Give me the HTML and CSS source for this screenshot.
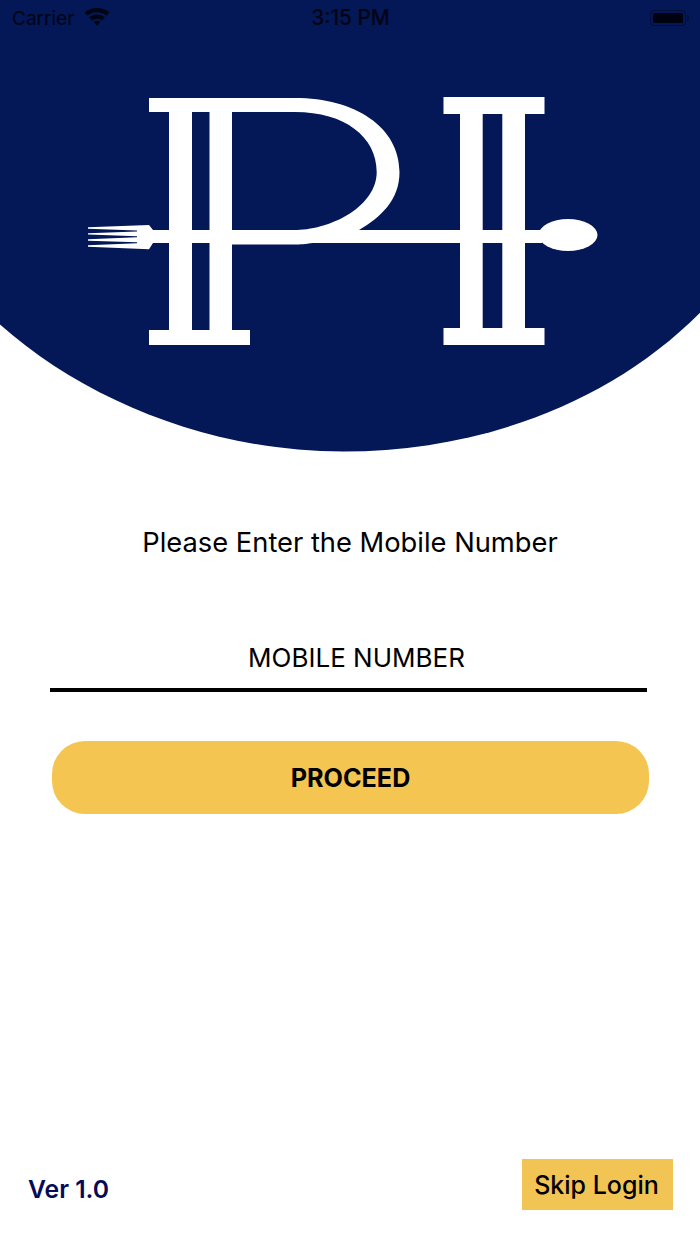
FILE: index.html
```html
<!DOCTYPE html>
<html lang="en">
<head>
<meta charset="utf-8">
<title>Login</title>
<link rel="stylesheet" href="styles.css">
</head>
<body>
<main class="screen">
  <header class="hero">
    <svg class="hero-art" viewBox="0 0 700 452" width="700" height="452" aria-hidden="true">
      <path class="disc" d="M0 0H700V312.700C610 403 480 451.500 343 451.500C210 451.500 85 400 0 324.500Z"/>
      <g class="logo">
        <rect x="149" y="98" width="101" height="14"/>
        <rect x="169" y="98" width="23" height="247"/>
        <rect x="209.500" y="98" width="22.500" height="247"/>
        <rect x="149" y="330" width="101" height="15"/>
        <rect x="443.500" y="97" width="101" height="17"/>
        <rect x="460" y="97" width="22.700" height="248"/>
        <rect x="502.300" y="97" width="22.700" height="248"/>
        <rect x="443.500" y="328" width="101" height="17"/>
        <rect x="150" y="230" width="392" height="13"/>
        <path d="M232 98H295C355 98 399.500 127 399.500 172C399.500 200 381 217 359 230V243H313C305 244 300 244.500 295 244.500H232V230H297C332 229 376.700 206 376.700 172C376.700 137 345 112 295 112H232Z"/>
        <ellipse cx="568" cy="235" rx="29.500" ry="16"/>
        <path d="M88 227.300L149 225L153 230V243L149 249.300L88 246.800V245.300L137 243.200V242.200L88 240.700V239.300L137 237.200V236.200L88 234.600V233.200L137 231.400V230.400L88 228.700Z"/>
      </g>
    </svg>
    <div class="status">
      <div class="status-left">
        <span>Carrier</span>
        <svg class="wifi" viewBox="0 0 26 18" width="26" height="18" aria-hidden="true">
          <path d="M9.800 14C11.800 12.400 14.200 12.400 16.200 14L13 18Z"/>
          <path d="M5.200 9.300C9.800 5.500 16.200 5.500 20.800 9.300L17.900 12.400C15 10.100 11 10.100 8.100 12.400Z"/>
          <path d="M.5 4.500C7.500 -1.500 18.500 -1.500 25.500 4.500L22.600 7.600C17 3 9 3 3.400 7.600Z"/>
        </svg>
      </div>
      <span class="clock">3:15 PM</span>
      <div class="battery-wrap">
        <div class="battery"><span class="battery-level"></span></div>
        <span class="battery-nub"></span>
      </div>
    </div>
  </header>

  <section class="login">
    <p class="prompt">Please Enter the Mobile Number</p>
    <div class="field">MOBILE NUMBER</div>
    <button class="proceed" type="button">PROCEED</button>
  </section>

  <footer class="foot">
    <span class="version">Ver 1.0</span>
    <button class="skip" type="button">Skip Login</button>
  </footer>
</main>
</body>
</html>
```

FILE: styles.css
```css
* { box-sizing: border-box; }
html, body { margin: 0; padding: 0; background: #fff; }
body { font-family: Inter, "Liberation Sans", sans-serif; color: #000; }
button { font-family: inherit; border: 0; padding: 0; color: #000; }

.screen {
  width: 700px;
  height: 1244px;
  display: flex;
  flex-direction: column;
  overflow: hidden;
}

.hero { position: relative; height: 452px; flex: none; }
.hero-art { display: block; }
.disc { fill: #041756; }
.logo { fill: #fff; }

.status {
  position: absolute;
  top: 0;
  left: 0;
  right: 0;
  height: 36px;
  display: flex;
  align-items: center;
  justify-content: space-between;
  padding: 0 11px 0 12px;
  font-size: 19px;
  color: #010513;
}
.status-left { display: flex; align-items: center; gap: 10px; width: 120px; }
.wifi { fill: #010513; margin-top: -2px; }
.clock { margin-top: -1px; font-size: 20.8px; font-weight: 500; }
.battery-wrap { width: 120px; display: flex; align-items: center; justify-content: flex-end; gap: 1px; }
.battery {
  width: 36px;
  height: 16px;
  border: 1px solid #010d3a;
  border-radius: 4px;
  padding: 2px;
}
.battery-level { display: block; height: 100%; background: #00030f; border-radius: 1.5px; }
.battery-nub { width: 2px; height: 6px; background: #010d3a; border-radius: 0 2px 2px 0; }

.login {
  display: flex;
  flex-direction: column;
  align-items: center;
  padding-top: 74px;
}
.prompt { margin: 0; font-size: 27.3px; line-height: 33px; }
.field {
  width: 597px;
  height: 64px;
  margin: 69px 0 0 -3px;
  border-bottom: 4px solid #000;
  padding: 14px 0 0 16px;
  font-size: 26px;
  line-height: 32px;
  text-align: center;
}
.proceed {
  width: 597px;
  height: 73px;
  margin: 49px 0 0 1px;
  border-radius: 33px;
  background: #f5c551;
  font-size: 25.2px;
  font-weight: 700;
}

.foot {
  margin-top: auto;
  display: flex;
  align-items: center;
  justify-content: space-between;
  padding: 0 27px 34px 28px;
}
.version { margin-top: 8px; font-size: 24.7px; font-weight: 600; color: #070a58; }
.skip {
  width: 151px;
  height: 51px;
  padding-right: 2px;
  background: #f2c453;
  font-size: 25px;
  font-weight: 500;
}
```
